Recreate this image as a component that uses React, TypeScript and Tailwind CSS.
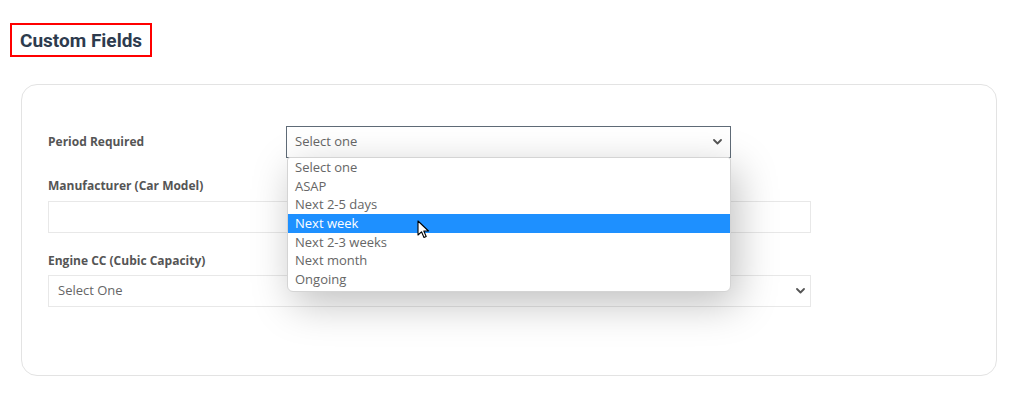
import React from "react";

const Chevron = ({ className = "" }: { className?: string }) => (
  <svg width="9" height="6" viewBox="0 0 9 6" className={className}>
    <path d="M1 1 L4.5 4.5 L8 1" fill="none" stroke="#555" strokeWidth="1.8" strokeLinecap="round" strokeLinejoin="round" />
  </svg>
);

const Cursor = () => (
  <svg width="14" height="20" viewBox="0 0 14 20" className="absolute left-[417px] top-[220px]">
    <path d="M1 1 L1 15 L4.5 11.8 L7 17.5 L9.2 16.5 L6.8 11 L11.5 11 Z" fill="#fff" stroke="#000" strokeWidth="1.1" strokeLinejoin="round" />
  </svg>
);

const options = ["Select one", "ASAP", "Next 2-5 days", "Next week", "Next 2-3 weeks", "Next month", "Ongoing"];

export default function App() {
  return (
    <div className="relative w-[1024px] h-[402px] bg-white overflow-hidden" style={{ fontFamily: "'Open Sans', sans-serif" }}>
      <div className="pt-[23px] pl-[10px]">
        <div className="inline-flex h-[34px] w-[142px] items-center border-2 border-[#ff0000] pl-[8px]">
          <h2 className="text-[19px] font-bold text-[#2d3b4e] leading-none" style={{ fontFamily: "Roboto, sans-serif" }}>
            Custom Fields
          </h2>
        </div>
      </div>

      <div className="ml-[21px] mt-[27px] w-[976px] h-[292px] rounded-[16px] border border-[#e3e3e3] px-[26px] pt-[41px]">
        <div className="flex items-center">
          <label className="w-[238px] text-[12px] font-bold text-[#555]">Period Required</label>
          <div className="flex h-[32px] w-[445px] items-center justify-between border border-[#5f6b77] pl-[8px] pr-[8px] text-[13px] text-[#666]">
            <span>Select one</span>
            <Chevron />
          </div>
        </div>

        <label className="mt-[20px] block text-[12px] font-bold text-[#555] leading-[16px]">Manufacturer (Car Model)</label>
        <div className="mt-[7px] h-[32px] w-[763px] border border-[#e8e8e8]" />

        <label className="mt-[20px] block text-[12px] font-bold text-[#555] leading-[16px]">Engine CC (Cubic Capacity)</label>
        <div className="mt-[6px] flex h-[32px] w-[763px] items-center justify-between border border-[#e8e8e8] pl-[9px] pr-[5px] text-[13px] text-[#666]">
          <span>Select One</span>
          <Chevron />
        </div>
      </div>

      <div className="absolute left-[287px] top-[157px] w-[444px] rounded-b-[6px] rounded-t-[3px] border border-[#d4d4d4] bg-white pb-[2px] shadow-[6px_12px_40px_rgba(0,0,0,0.25)]">
        {options.map((o) => (
          <div
            key={o}
            className={`h-[18.7px] pl-[7px] text-[13px] leading-[18.7px] ${o === "Next week" ? "bg-[#1e90ff] text-white" : "text-[#666]"}`}
          >
            {o}
          </div>
        ))}
      </div>
      <Cursor />
    </div>
  );
}
